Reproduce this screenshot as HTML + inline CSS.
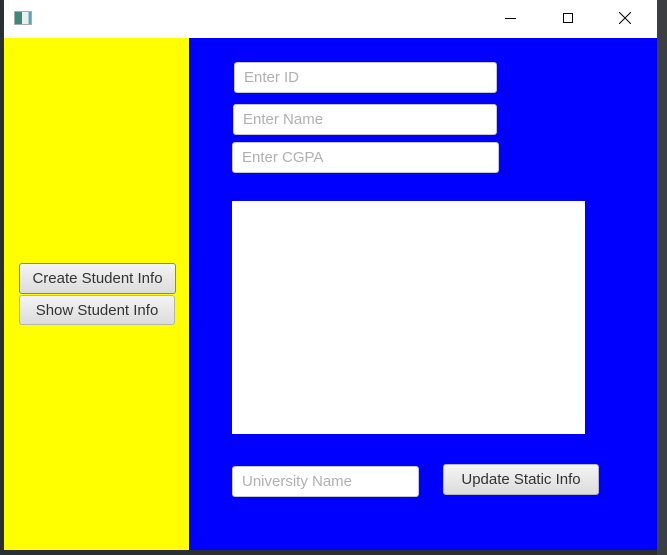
<!DOCTYPE html>
<html><head><style>
*{margin:0;padding:0;box-sizing:border-box}
body{width:667px;height:555px;background:#2b2f33;position:relative;overflow:hidden;font-family:"Liberation Sans",sans-serif}
.a{position:absolute}
.tf{position:absolute;background:#fff;border:1px solid #c5c5c5;border-radius:3px;color:#b0b0b0;font-size:15px;padding-left:9px;display:flex;align-items:center}
.btn{position:absolute;background:linear-gradient(#f4f4f4,#dcdcdc);border:1px solid #b5b5b5;border-radius:3px;color:#333;font-size:15px;display:flex;align-items:center;justify-content:center}
</style></head><body>
<div class="a" style="left:657px;top:0;width:10px;height:555px;background:#3c3f41"></div>
<div class="a" style="left:4px;top:0;width:653px;height:38px;background:#fff"></div>
<div class="a" style="left:14px;top:11px;width:18px;height:14px;border:1px solid #aaa;background:linear-gradient(90deg,#3a8a7a 45%,#eee 45%,#eee 85%,#5ab 85%)"></div>
<div class="a" style="left:505px;top:18px;width:11px;height:1px;background:#000"></div>
<div class="a" style="left:563px;top:13px;width:10px;height:10px;border:1px solid #000"></div>
<svg class="a" style="left:619px;top:12px" width="12" height="12"><path d="M0 0L12 12M12 0L0 12" stroke="#000" stroke-width="1"/></svg>
<div class="a" style="left:4px;top:38px;width:185px;height:512px;background:#ff0"></div>
<div class="a" style="left:189px;top:38px;width:468px;height:512px;background:#00f"></div>
<div class="btn" style="left:19px;top:263px;width:157px;height:31px;border-color:#3a9fbf">Create Student Info</div>
<div class="btn" style="left:19px;top:295px;width:156px;height:30px">Show Student Info</div>
<div class="tf" style="left:234px;top:62px;width:263px;height:31px">Enter ID</div>
<div class="tf" style="left:233px;top:104px;width:264px;height:31px">Enter Name</div>
<div class="tf" style="left:232px;top:142px;width:267px;height:31px">Enter CGPA</div>
<div class="a" style="left:232px;top:201px;width:353px;height:233px;background:#fff"></div>
<div class="tf" style="left:232px;top:466px;width:187px;height:31px">University Name</div>
<div class="btn" style="left:443px;top:464px;width:156px;height:31px">Update Static Info</div>
</body></html>
